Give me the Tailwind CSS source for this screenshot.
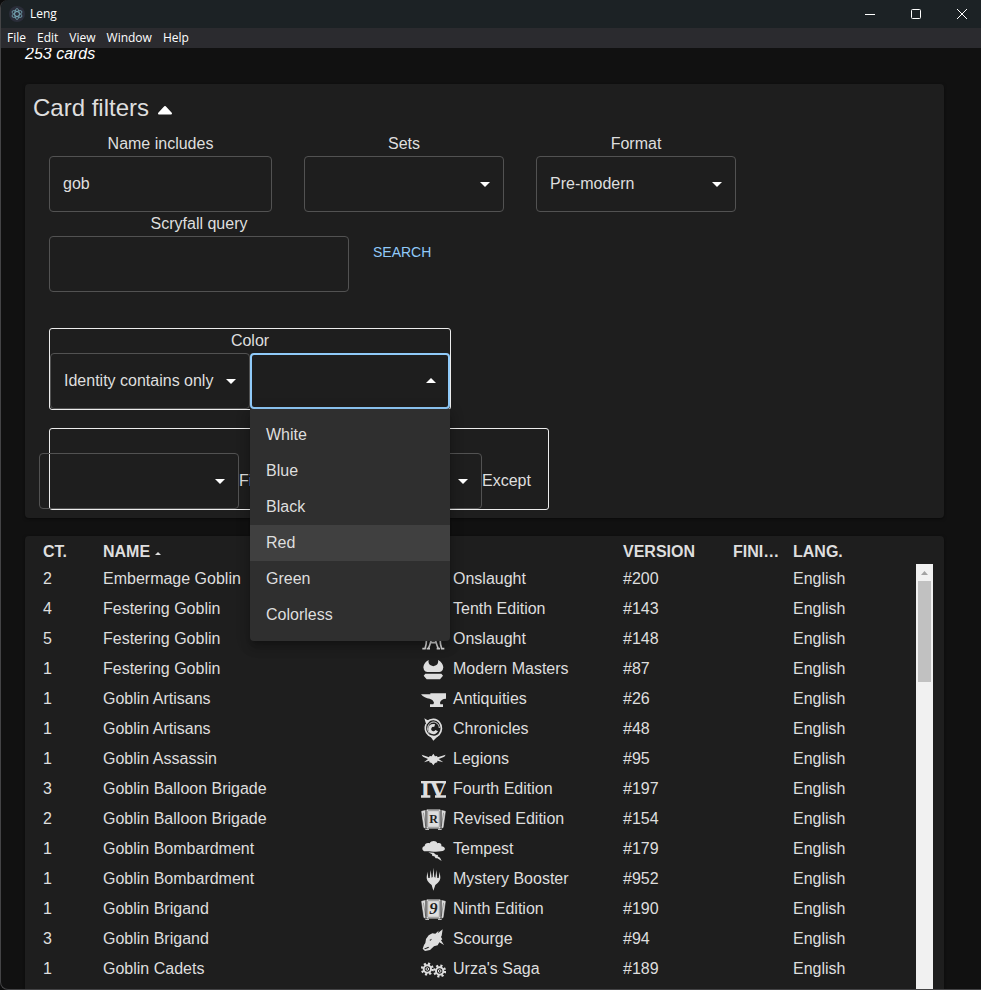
<!DOCTYPE html>
<html lang="en">
<head>
<meta charset="utf-8">
<meta name="viewport" content="width=device-width, initial-scale=1">
<title>Leng</title>
<script src="https://cdn.jsdelivr.net/npm/@tailwindcss/browser@4"></script>
</head>
<body class="bg-[#0c0c0c] font-['Liberation_Sans',Arial,sans-serif] text-base text-[#dedede]">

<!-- Set symbols and shared arrows -->
<svg class="hidden" aria-hidden="true">
  <symbol id="down" viewBox="0 0 24 24"><path d="M7 10l5 5 5-5z" fill="#fff"/></symbol>
  <symbol id="ons" viewBox="0 0 75 78"><g fill="none" stroke="#dedede" stroke-width="5"><path d="M4 68H12C18 50 18 30 12 12M70 68H62C56 50 56 30 62 12"/><path d="M22 68C30 50 34 30 37 10C40 30 44 50 52 68M28 50H46M17 68H27M47 68H57"/></g></symbol>
  <symbol id="10e" viewBox="0 0 75 78"><path d="M8 12H32L38 28L46 12H68L48 38L68 66H44L37 50L28 66H6L27 38Z" fill="#dedede"/></symbol>
  <symbol id="mma" viewBox="0 0 75 78"><path fill="#dedede" d="M23 12C14 16 8 25 7 34L9 42C12 46 14 48 19 48H55C60 48 62 46 65 42L67 34C66 25 60 16 51 12C53 19 50 25 45 28L37 31L29 28C24 25 21 19 23 12ZM13 53H61L66 59L57 70H17L8 59Z"/></symbol>
  <symbol id="atq" viewBox="0 0 75 78"><path fill="#dedede" d="M0 25H28V22H75V38C65 38 58 43 57 50L58 55H66V63H27V55H37L39 50C37 44 34 40 26 38C16 37 6 33 0 25Z"/></symbol>
  <symbol id="chr" viewBox="0 0 75 78"><g fill="none" stroke="#dedede"><path d="M41 29A11 11 0 1 0 47 44" stroke-width="9"/><path stroke-width="5" d="M18 17C30 7 47 8 55 19C64 30 63 46 54 56C46 64 32 64 23 57C12 48 11 36 15 25"/><path stroke-width="3" d="M26 52C16 43 19 24 32 19C44 15 54 24 55 36"/></g><path fill="#dedede" d="M10 7L20 13L30 11L16 27ZM26 58L37 74L57 54L44 60Z"/></symbol>
  <symbol id="lgn" viewBox="0 0 75 78"><path fill="#dedede" d="M2 26L24 34L26 30L32 31L37 23L42 31L48 30L50 34L74 26L70 32L53 39L67 49L49 44L49 49L42 51L37 58L32 51L25 49L25 44L9 49L21 39L6 32Z"/></symbol>
  <symbol id="4ed" viewBox="0 0 75 78"><path fill="#dedede" d="M0 15H75V22H0ZM0 58H28V65H0ZM42 58H75V65H42Z"/><text x="37" y="64" text-anchor="middle" font-family="DejaVu Serif" font-weight="700" font-size="62" fill="#dedede">IV</text></symbol>
  <symbol id="cards" viewBox="0 0 75 78"><path fill="#dedede" stroke="#dedede" stroke-width="2" stroke-linejoin="round" d="M2 16L16 13V66L9 65ZM73 16L59 13V66L66 65Z"/><path fill="none" stroke="#777" stroke-width="2" d="M7 20L14 60M68 20L61 60"/><rect x="15" y="9" width="45" height="60" rx="4" fill="#dedede" stroke="#1e1e1e" stroke-width="3"/><rect x="20" y="14" width="35" height="50" rx="2" fill="none" stroke="#777" stroke-width="2"/><path d="M13 70H24M51 70H62" stroke="#dedede" stroke-width="3"/></symbol>
  <symbol id="3ed" viewBox="0 0 75 78"><use href="#cards"/><text x="38" y="51" text-anchor="middle" font-family="Liberation Serif" font-weight="700" font-size="36" fill="#1e1e1e">R</text></symbol>
  <symbol id="9ed" viewBox="0 0 75 78"><use href="#cards"/><text x="37" y="55" text-anchor="middle" font-family="Liberation Serif" font-style="italic" font-weight="700" font-size="50" fill="#1e1e1e">9</text></symbol>
  <symbol id="tmp" viewBox="0 0 75 78"><path fill="#dedede" d="M13 46C2 46 1 32 11 30C11 22 20 19 26 22C30 13 46 12 49 22C58 19 63 25 61 31C74 31 75 44 65 45C52 48 22 47 13 46Z"/><path fill="#dedede" d="M22 49L38 50L45 56L51 57L50 61L57 65L62 75L49 67L44 67L40 61L34 60L33 55Z"/></symbol>
  <symbol id="mb1" viewBox="0 0 75 78"><path fill="#dedede" d="M37 5L40 33L43 35L46 12L49 36L53 36L56 17L58 34C58 46 50 51 43 57L37 74L32 57C25 51 17 46 17 34L19 17L22 36L26 36L29 12L32 35L35 33Z"/></symbol>
  <symbol id="scg" viewBox="0 0 75 78"><path fill="#dedede" d="M65 10L62 29L60 33L64 40L60 43L69 57L55 49L50 58L39 61L27 72L12 75L5 68L9 57L13 51L15 39L23 28L34 22L43 23L53 14L50 22Z"/><path d="M25 42L33 38L29 44ZM9 68L22 62L24 65L12 70Z" fill="#1e1e1e"/></symbol>
  <symbol id="usg" viewBox="0 0 75 78"><g fill="none" stroke="#dedede"><g id="gear"><circle cx="19" cy="39" r="16" stroke-width="7" stroke-dasharray="6.3 6.27"/><circle cx="19" cy="39" r="11" stroke-width="6"/><circle cx="19" cy="39" r="4" stroke-width="3"/></g><use href="#gear" x="37" y="6"/></g></symbol>
</svg>

<div class="flex h-screen flex-col overflow-hidden rounded-l-lg border-b border-l border-[#444446] bg-[#111]">
  <header class="shrink-0 font-['Open_Sans','Noto_Sans',sans-serif] text-xs text-white">
    <div class="flex h-7 items-center bg-[#1c2225] pl-2">
      <svg class="size-4" viewBox="0 0 32 32" aria-hidden="true"><circle cx="16" cy="16" r="16" fill="#2b2e3a"/><g fill="none" stroke="#9feaf9" stroke-opacity=".65" stroke-width="1.5"><ellipse cx="16" cy="16" rx="11" ry="4.500" transform="rotate(30 16 16)"/><ellipse cx="16" cy="16" rx="11" ry="4.500" transform="rotate(90 16 16)"/><ellipse cx="16" cy="16" rx="11" ry="4.500" transform="rotate(150 16 16)"/></g></svg>
      <span class="ml-[5px] flex-1">Leng</span>
      <div class="-mr-1 flex">
        <button class="flex h-6 w-[46px] items-center justify-center" aria-label="Minimize"><svg width="12" height="12" viewBox="0 0 12 12"><path d="M1 6.500H11" stroke="#fff"/></svg></button>
        <button class="flex h-6 w-[46px] items-center justify-center" aria-label="Maximize"><svg width="12" height="12" viewBox="0 0 12 12"><rect x="1.500" y="1.500" width="9" height="9" rx="1" fill="none" stroke="#fff"/></svg></button>
        <button class="flex h-6 w-[46px] items-center justify-center" aria-label="Close"><svg width="12" height="12" viewBox="0 0 12 12"><path d="M1 1L11 11M11 1L1 11" stroke="#fff"/></svg></button>
      </div>
    </div>
    <nav class="flex h-5 items-center gap-[11px] bg-[#2b2b2f] pl-[6px]">
      <button>File</button><button>Edit</button><button>View</button><button>Window</button><button>Help</button>
    </nav>
  </header>

  <main class="min-h-0 flex-1 overflow-hidden pr-[37px] pl-6">
    <p class="-mt-[6px] mb-[18px] leading-6 text-white italic">253 cards</p>

    <section class="rounded bg-[#1e1e1e] p-2 shadow-[0_1px_3px_rgba(0,0,0,0.5)]">
      <button class="flex h-8 items-center gap-2 text-2xl" aria-expanded="true">Card filters
        <svg class="mt-1" width="16" height="10" viewBox="0 0 16 10"><path d="M2 8.500H14L8 2Z" fill="#fff" stroke="#fff" stroke-width="2" stroke-linejoin="round"/></svg>
      </button>

      <div class="mt-2 flex gap-8 px-4">
        <div class="flex w-[223px] flex-col">
          <label for="name" class="text-center leading-6">Name includes</label>
          <input id="name" value="gob" class="h-14 rounded border border-[#525252] bg-transparent px-[13px]">
        </div>
        <div class="flex w-[200px] flex-col">
          <label for="sets" class="text-center leading-6">Sets</label>
          <div class="relative">
            <select id="sets" class="h-14 w-full appearance-none rounded border border-[#525252] bg-transparent pl-[13px]"><option></option></select>
            <svg class="pointer-events-none absolute top-4 right-[7px] size-6"><use href="#down"/></svg>
          </div>
        </div>
        <div class="flex w-[200px] flex-col">
          <label for="format" class="text-center leading-6">Format</label>
          <div class="relative">
            <select id="format" class="h-14 w-full appearance-none rounded border border-[#525252] bg-transparent pl-[13px]"><option>Pre-modern</option></select>
            <svg class="pointer-events-none absolute top-4 right-[7px] size-6"><use href="#down"/></svg>
          </div>
        </div>
      </div>

      <div class="flex items-center gap-4 px-4">
        <div class="flex w-[300px] flex-col">
          <label for="query" class="text-center leading-6">Scryfall query</label>
          <input id="query" class="h-14 rounded border border-[#525252] bg-transparent px-[13px]">
        </div>
        <button class="px-2 py-[6px] text-sm text-[#90caf9]">SEARCH</button>
      </div>

      <div class="mx-4 mt-9 w-fit rounded-[3px] border border-[#ececec]" role="group" aria-labelledby="color-label">
        <label id="color-label" for="color" class="block text-center leading-6">Color</label>
        <div class="flex">
          <div class="relative w-[200px]">
            <select aria-label="Color match" class="h-14 w-full appearance-none rounded border border-[#525252] bg-transparent pl-[13px]"><option>Identity contains only</option></select>
            <svg class="pointer-events-none absolute top-4 right-[7px] size-6"><use href="#down"/></svg>
          </div>
          <div class="relative w-[200px]">
            <select id="color" class="h-14 w-full appearance-none rounded border-2 border-[#90caf9] bg-transparent pl-3"><option></option></select>
            <svg class="pointer-events-none absolute top-4 right-[7px] size-6 rotate-180"><use href="#down"/></svg>
            <ul role="listbox" aria-label="Color" class="absolute top-full left-0 z-10 w-full rounded-b bg-[#2f2f2f] py-2 shadow-[0_5px_5px_-3px_rgba(0,0,0,0.2),0_8px_10px_1px_rgba(0,0,0,0.14),0_3px_14px_2px_rgba(0,0,0,0.12)]">
              <li role="option" class="px-4 py-[6px] leading-6">White</li>
              <li role="option" class="px-4 py-[6px] leading-6">Blue</li>
              <li role="option" class="px-4 py-[6px] leading-6">Black</li>
              <li role="option" class="bg-[#404040] px-4 py-[6px] leading-6">Red</li>
              <li role="option" class="px-4 py-[6px] leading-6">Green</li>
              <li role="option" class="px-4 py-[6px] leading-6">Colorless</li>
            </ul>
          </div>
        </div>
      </div>

      <div class="mx-4 mt-[18px] flex w-[500px] justify-center rounded-[3px] border border-[#ececec] pt-6">
        <div class="flex w-[520px] shrink-0 items-center">
          <div class="relative w-[200px]">
            <select aria-label="Finish match" class="h-14 w-full appearance-none rounded border border-[#525252] bg-transparent pl-[13px]"><option></option></select>
            <svg class="pointer-events-none absolute top-4 right-[7px] size-6"><use href="#down"/></svg>
          </div>
          <label for="finish" class="w-[43px]">Finish</label>
          <div class="relative w-[200px]">
            <select id="finish" class="h-14 w-full appearance-none rounded border border-[#525252] bg-transparent pl-[13px]"><option></option></select>
            <svg class="pointer-events-none absolute top-4 right-[7px] size-6"><use href="#down"/></svg>
          </div>
          <span>Except</span>
        </div>
      </div>
    </section>

    <section class="mt-[18px] flex rounded bg-[#1e1e1e] pt-1 pr-[11px] pl-2 shadow-[0_1px_3px_rgba(0,0,0,0.5)]">
      <div class="min-w-0 flex-1">
        <table class="w-full table-fixed border-collapse text-left leading-6">
          <colgroup><col class="w-[60px]"><col><col class="w-[202px]"><col class="w-[110px]"><col class="w-[60px]"><col class="w-[133px]"></colgroup>
          <thead>
            <tr class="h-6">
              <th class="p-0 pl-[10px]">CT.</th>
              <th class="p-0 pl-[10px]" aria-sort="ascending"><span class="flex items-center gap-1">NAME <svg class="mt-[2px]" width="8" height="4" viewBox="0 0 8 4"><path d="M1 4L4 1L7 4Z" fill="#dedede"/></svg></span></th>
              <th class="p-0"></th>
              <th class="p-0 pl-[10px]">VERSION</th>
              <th class="truncate p-0 pl-[10px]">FINISH</th>
              <th class="p-0 pl-[10px]">LANG.</th>
            </tr>
          </thead>
          <tbody id="rows"></tbody>
        </table>
      </div>
      <div class="mt-6 w-[17px] bg-[#f1f1f1]" aria-hidden="true">
        <svg class="block" width="17" height="17" viewBox="0 0 17 17"><path d="M5 11L8.500 7L12 11Z" fill="#a3a3a3"/></svg>
        <div class="mx-[2px] h-[101px] bg-[#c1c1c1]"></div>
      </div>
    </section>
  </main>
</div>

<script>
  const cards = [
    [2, "Embermage Goblin", "ons", "Onslaught", 200],
    [4, "Festering Goblin", "10e", "Tenth Edition", 143],
    [5, "Festering Goblin", "ons", "Onslaught", 148],
    [1, "Festering Goblin", "mma", "Modern Masters", 87],
    [1, "Goblin Artisans", "atq", "Antiquities", 26],
    [1, "Goblin Artisans", "chr", "Chronicles", 48],
    [1, "Goblin Assassin", "lgn", "Legions", 95],
    [3, "Goblin Balloon Brigade", "4ed", "Fourth Edition", 197],
    [2, "Goblin Balloon Brigade", "3ed", "Revised Edition", 154],
    [1, "Goblin Bombardment", "tmp", "Tempest", 179],
    [1, "Goblin Bombardment", "mb1", "Mystery Booster", 952],
    [1, "Goblin Brigand", "9ed", "Ninth Edition", 190],
    [3, "Goblin Brigand", "scg", "Scourge", 94],
    [1, "Goblin Cadets", "usg", "Urza's Saga", 189]
  ];
  document.getElementById("rows").innerHTML = cards.map(([count, name, code, set, number]) => `
    <tr class="h-[30px]">
      <td class="p-0 pl-[10px]">${count}</td>
      <td class="truncate p-0 pl-[10px]">${name}</td>
      <td class="p-0 pl-[10px]"><span class="flex items-center gap-[7px]"><svg class="h-[26px] w-[25px] shrink-0" aria-hidden="true"><use href="#${code}"/></svg>${set}</span></td>
      <td class="p-0 pl-[10px]">#${number}</td>
      <td class="p-0 pl-[10px]"></td>
      <td class="p-0 pl-[10px]">English</td>
    </tr>`).join("") + `<tr class="h-[30px]" aria-hidden="true"><td colspan="6"></td></tr>`;
</script>
</body>
</html>
